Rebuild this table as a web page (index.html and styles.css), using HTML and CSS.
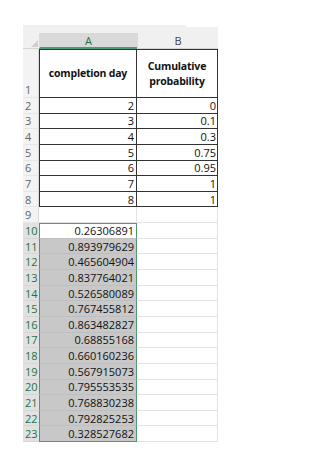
FILE: index.html
```html
<!DOCTYPE html>
<html>
<head>
<meta charset="utf-8">
<link rel="stylesheet" href="styles.css">
</head>
<body>
<div class="sheet">
  <div class="topband"><div class="tb-left"></div><div class="tb-right"></div></div>
  <div class="grid">
    <div class="corner"><span class="tri"></span></div>
    <div class="colhead sel">A</div>
    <div class="colhead">B</div>

    <div class="rh tall">1</div>
    <div class="c t hdr ca top">completion day</div>
    <div class="c t hdr cb top">Cumulative<br>probability</div>

    <div class="rh">2</div><div class="c t ca num">2</div><div class="c t cb num">0</div>
    <div class="rh">3</div><div class="c t ca num">3</div><div class="c t cb num">0.1</div>
    <div class="rh">4</div><div class="c t ca num">4</div><div class="c t cb num">0.3</div>
    <div class="rh">5</div><div class="c t ca num">5</div><div class="c t cb num">0.75</div>
    <div class="rh">6</div><div class="c t ca num">6</div><div class="c t cb num">0.95</div>
    <div class="rh">7</div><div class="c t ca num">7</div><div class="c t cb num">1</div>
    <div class="rh">8</div><div class="c t ca num">8</div><div class="c t cb num">1</div>
    <div class="rh">9</div><div class="c g"></div><div class="c g"></div>

    <div class="rh rs">10</div><div class="c s active first num">0.26306891</div><div class="c g"></div>
    <div class="rh rs">11</div><div class="c s num">0.893979629</div><div class="c g"></div>
    <div class="rh rs">12</div><div class="c s num">0.465604904</div><div class="c g"></div>
    <div class="rh rs">13</div><div class="c s num">0.837764021</div><div class="c g"></div>
    <div class="rh rs">14</div><div class="c s num">0.526580089</div><div class="c g"></div>
    <div class="rh rs">15</div><div class="c s num">0.767455812</div><div class="c g"></div>
    <div class="rh rs">16</div><div class="c s num">0.863482827</div><div class="c g"></div>
    <div class="rh rs">17</div><div class="c s num">0.68855168</div><div class="c g"></div>
    <div class="rh rs">18</div><div class="c s num">0.660160236</div><div class="c g"></div>
    <div class="rh rs">19</div><div class="c s num">0.567915073</div><div class="c g"></div>
    <div class="rh rs">20</div><div class="c s num">0.795553535</div><div class="c g"></div>
    <div class="rh rs">21</div><div class="c s num">0.768830238</div><div class="c g"></div>
    <div class="rh rs">22</div><div class="c s num">0.792825253</div><div class="c g"></div>
    <div class="rh rs">23</div><div class="c s last num">0.328527682</div><div class="c g"></div>
  </div>
</div>
</body>
</html>
```

FILE: styles.css
```css
* { box-sizing: border-box; }
html, body { margin: 0; padding: 0; background: #fff; }
body { font-family: "Open Sans", "Liberation Sans", sans-serif; font-size: 11px; color: #111; }

.sheet { margin: 25px 0 0 23px; width: 195px; }

.topband { display: flex; height: 8px; }
.tb-left { width: 163px; background: #f0f0f0; }
.tb-right { width: 32px; margin-top: 2px; background: #f0f0f0; }

.grid {
  display: grid;
  grid-template-columns: 16px 98px 81px;
  grid-template-rows: 16px 49px repeat(22, 15.65px);
}

.corner { background: #f0f0f0; position: relative; border-bottom: 1px solid #d4d4d4; }
.tri {
  position: absolute; right: 1px; bottom: 1px;
  width: 0; height: 0;
  border-left: 7px solid transparent;
  border-bottom: 7px solid #cfcfcf;
}

.colhead {
  background: #f0f0f0;
  color: #444;
  text-align: center;
  line-height: 16px;
  font-size: 11px;
  border-bottom: 1px solid #d4d4d4;
  border-left: 1px solid #dadada;
}
.colhead.sel {
  background: #d9d9d9;
  color: #217346;
  border-bottom: 2px solid #4f9a72;
  line-height: 15px;
}

.rh {
  background: #f3f3f3;
  color: #666;
  font-size: 11px;
  padding-left: 2px;
  display: flex;
  align-items: center;
  border-bottom: 1px solid #e6e6e6;
  border-right: 1px solid #d9d9d9;
}
.rh.tall { align-items: flex-end; }
.rh.rs { background: #e1e1e1; color: #217346; border-right: 0; border-bottom-color: #d6d6d6; }

.c {
  display: flex;
  align-items: center;
  white-space: nowrap;
  overflow: hidden;
}
.num { justify-content: flex-end; padding-right: 2px; }

.t { border-right: 1px solid #333; border-bottom: 1px solid #333; }
.t.ca { border-left: 1px solid #333; }
.t.top { border-top: 1px solid #333; }
.hdr { font-weight: 700; font-size: 10.5px; letter-spacing: -0.2px; justify-content: center; text-align: center; line-height: 15px; }
.cb.num { padding-right: 1px; }

.g { border-right: 1px solid #e2e2e2; border-bottom: 1px solid #e2e2e2; }

.s {
  background: #c8c8c8;
  border-left: 1px solid #4f9a72;
  border-right: 1px solid #4f9a72;
  border-bottom: 1px solid #bfbfbf;
}
.s.active { background: #fff; }
.s.first { border-top: 1px solid #4f9a72; }
.s.last { border-bottom: 1px solid #4f9a72; }
```
